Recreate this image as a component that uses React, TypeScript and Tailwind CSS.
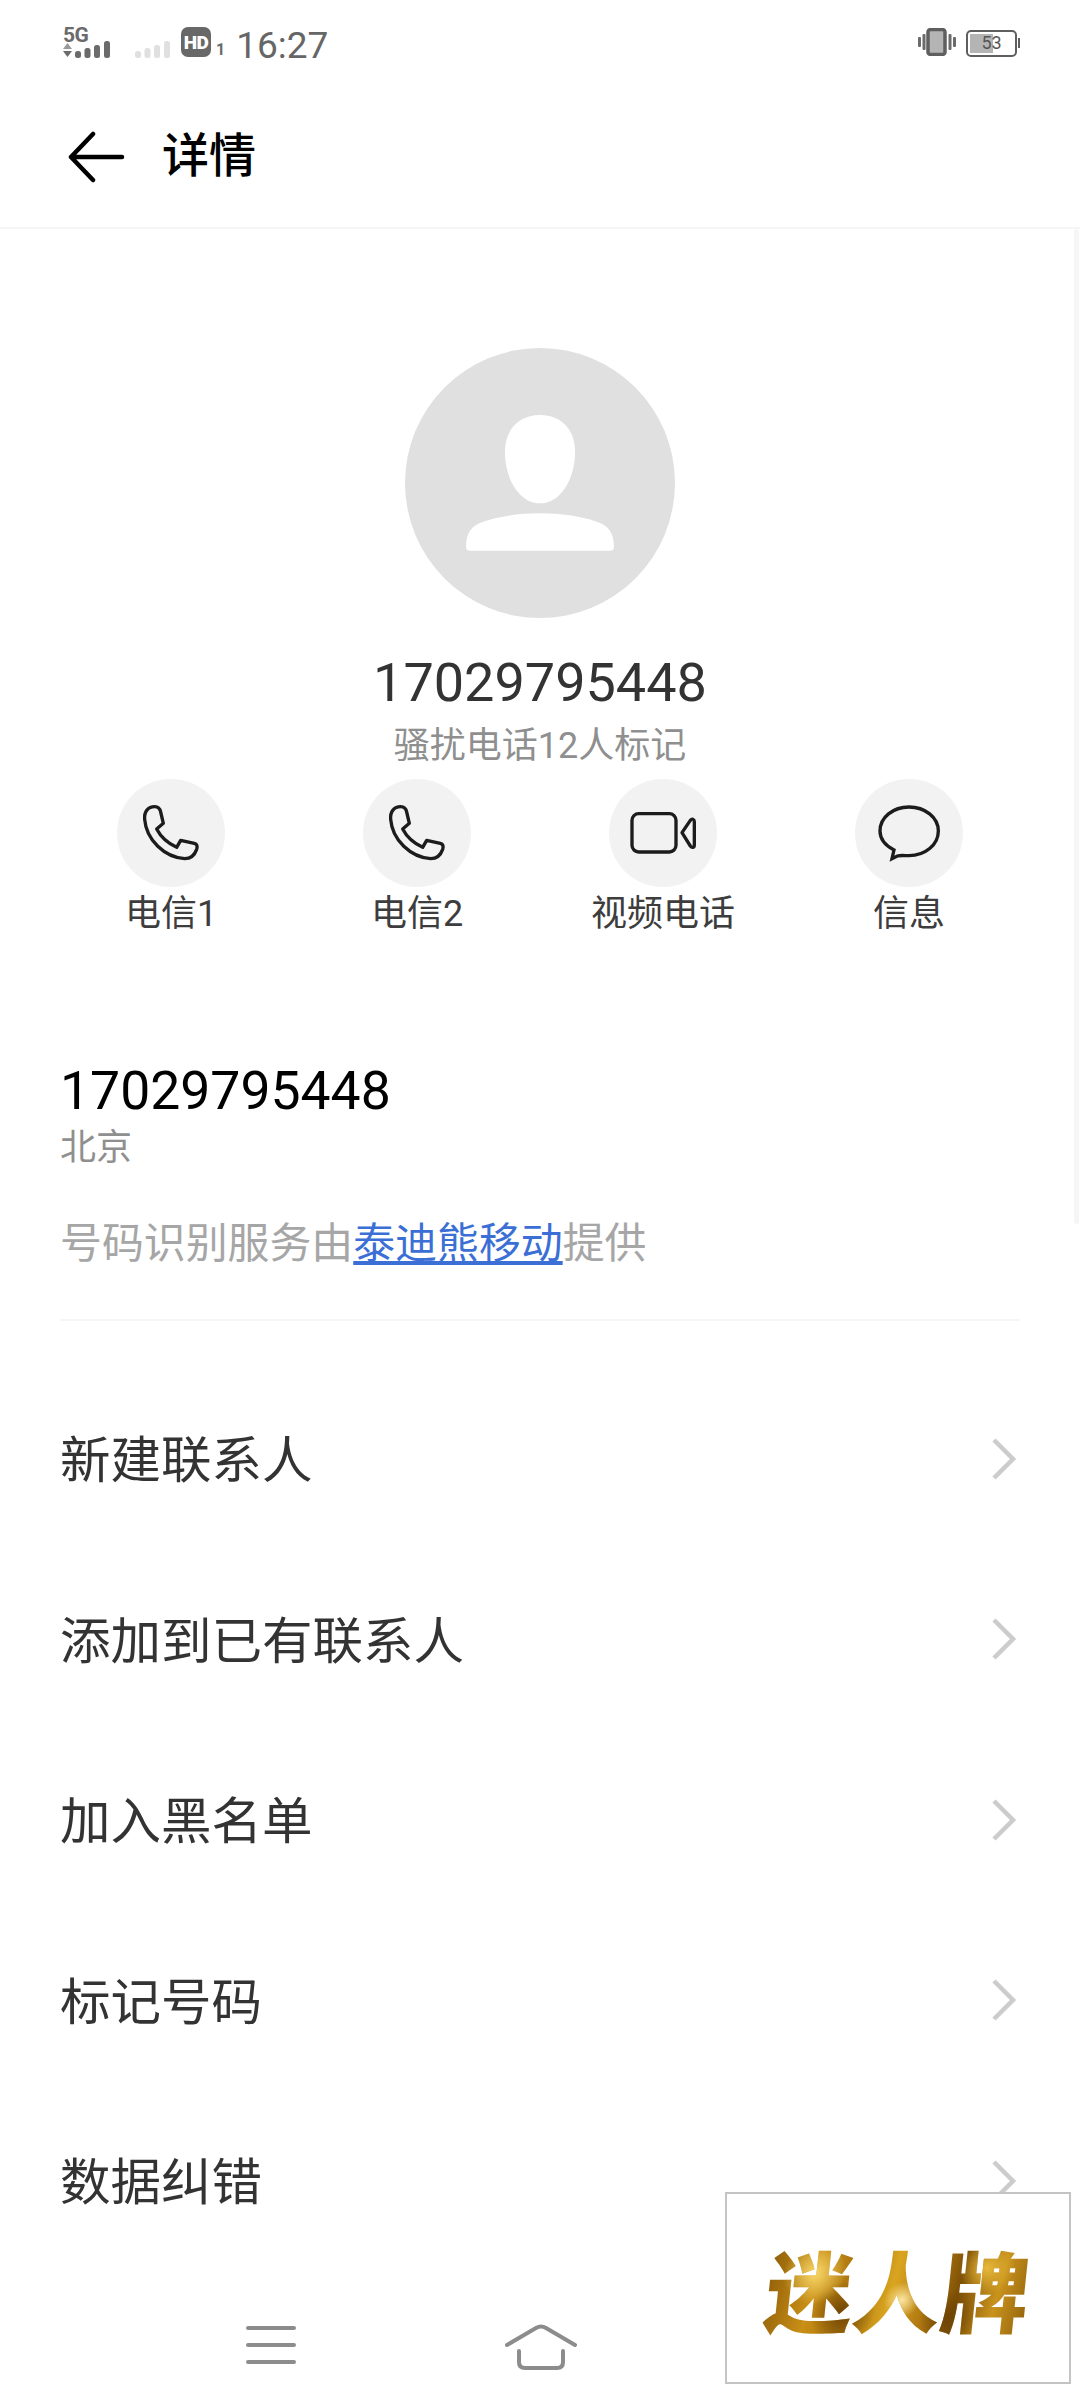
import React from "react"

const rows = ["新建联系人", "添加到已有联系人", "加入黑名单", "标记号码", "数据纠错"]

// Signal bars for the two SIM slots
function Bars({ color }: { color: string }) {
  return (
    <svg width="36" height="17" viewBox="0 0 36 17">
      <rect x="0" y="10" width="6" height="7" rx="2.5" fill={color} />
      <rect x="9.5" y="7" width="6" height="10" rx="2.5" fill={color} />
      <rect x="19" y="4" width="6" height="13" rx="2.5" fill={color} />
      <rect x="29" y="0" width="6" height="17" rx="2.5" fill={color} />
    </svg>
  )
}

function StatusBar() {
  return (
    <div className="flex h-[76px] items-start justify-between pl-[63px] pr-[60px] pt-[27px]">
      <div className="flex items-start">
        <div className="relative h-[31px] w-[48px]">
          <span className="absolute left-0 top-[-4px] text-[21px] font-bold leading-[24px] tracking-[-0.5px] text-[#6b6b6b]">5G</span>
          <svg className="absolute left-0 top-[16px]" width="9" height="14" viewBox="0 0 9 14">
            <path d="M4.5 0 9 6H0Z" fill="#9a9a9a" />
            <path d="M0 8h9l-4.500 6Z" fill="#6b6b6b" />
          </svg>
          <div className="absolute left-[12px] top-[14px]">
            <Bars color="#6b6b6b" />
          </div>
        </div>
        <div className="ml-[24px] mt-[14px]">
          <Bars color="#e0e0e0" />
        </div>
        <div className="ml-[10px] flex h-[30px] w-[30px] items-center justify-center rounded-[7px] bg-[#686868] text-[19px] font-black leading-none tracking-[-0.5px] text-white">
          HD
        </div>
        <span className="ml-[5px] mt-[14px] text-[16px] font-bold leading-[18px] text-[#6b6b6b]">1</span>
        <span className="ml-[11px] mt-[-3px] text-[37px] leading-[44px] text-[#666666]">16:27</span>
      </div>
      <div className="flex items-start">
        <svg className="mt-[1px]" width="38" height="28" viewBox="0 0 38 28">
          <rect x="10" y="1.500" width="17" height="25" rx="2.500" fill="#b4b4b4" stroke="#5f5f5f" strokeWidth="3.500" />
          <rect x="0" y="9" width="3" height="10" rx="1" fill="#6b6b6b" />
          <rect x="4.500" y="6" width="3" height="16" rx="1" fill="#6b6b6b" />
          <rect x="30.500" y="6" width="3" height="16" rx="1" fill="#6b6b6b" />
          <rect x="35" y="9" width="3" height="10" rx="1" fill="#6b6b6b" />
        </svg>
        <div className="relative ml-[10px] mt-[3px] h-[27px] w-[51px] overflow-hidden rounded-[5px] border-[2.5px] border-[#5f5f5f] p-[2px]">
          <div className="h-full w-[23px] bg-[#b4b4b4]" />
          <span className="absolute inset-0 text-center text-[18px] leading-[22px] text-[#555555]">53</span>
        </div>
        <div className="ml-[1px] mt-[11px] h-[10px] w-[2px] bg-[#5f5f5f]" />
      </div>
    </div>
  )
}

function PhoneIcon() {
  return (
    <svg width="108" height="108" viewBox="112 57 324 324" fill="none" stroke="#1c1c1c" strokeWidth="10" strokeLinejoin="round">
      <path d="M195 178C193 155 205 140 225 140C237 140 241 146 243 156L251 190L231 207C243 230 265 250 291 262L303 241L344 250C352 252 354 258 351 268C345 285 335 296 315 296C255 292 200 240 195 178Z" />
    </svg>
  )
}

function VideoIcon() {
  return (
    <svg width="108" height="108" viewBox="87 57 324 324" fill="none" stroke="#1c1c1c" strokeWidth="10" strokeLinejoin="round">
      <rect x="156" y="161" width="132" height="115" rx="20" />
      <path d="M306 218L331 181C336 175 343 177 343 185V255C343 263 336 265 331 258Z" />
    </svg>
  )
}

function MessageIcon() {
  return (
    <svg width="108" height="108" viewBox="825 57 324 324" fill="none" stroke="#1c1c1c" strokeWidth="10" strokeLinejoin="miter">
      <path d="M942 270C915 256 900 236 900 213C900 172 939 141 987 141C1035 141 1075 172 1075 213C1075 255 1035 287 987 287C975 287 962 285 952 288L936 296Z" />
    </svg>
  )
}

function Action({ label, children }: { label: string; children: React.ReactNode }) {
  return (
    <div className="flex flex-col items-center">
      <div className="flex h-[108px] w-[108px] items-center justify-center rounded-full bg-[#f2f2f2]">{children}</div>
      <span className="mt-[5px] text-[36px] leading-[44px] text-[#3d3d3d]">{label}</span>
    </div>
  )
}

export default function App() {
  return (
    <div
      className="relative flex h-[2408px] w-[1080px] flex-col overflow-hidden bg-white"
      style={{ fontFamily: 'Roboto, "Noto Sans CJK SC", sans-serif' }}
    >
      <StatusBar />

      {/* Header */}
      <div className="flex h-[153px] items-start border-b-2 border-[#f5f5f5] pl-[68px]">
        <svg className="mt-[55px]" width="58" height="52" viewBox="0 0 58 52" fill="none" stroke="#000000" strokeWidth="4.500" strokeLinecap="round" strokeLinejoin="round">
          <path d="M3 26H54M25 3 3 26 25 49" />
        </svg>
        <span className="ml-[36px] mt-[51px] text-[47px] font-medium leading-[58px] text-black">详情</span>
      </div>

      {/* Content */}
      <div className="relative min-h-0 flex-1 overflow-hidden">
        <div className="absolute right-[1px] top-0 h-[995px] w-[5px] rounded-full bg-[#f6f6f6]" />

        <div className="flex flex-col items-center pt-[119px]">
          <svg width="270" height="270" viewBox="75 54 810 810">
            <circle cx="480" cy="459" r="405" fill="#e0e0e0" />
            <path d="M480 255C545 255 585 300 585 365C585 450 540 520 480 520C420 520 375 450 375 365C375 300 415 255 480 255Z" fill="#ffffff" />
            <path d="M258 650C258 610 275 585 310 575C360 558 420 550 480 550C540 550 600 558 650 575C685 585 702 610 702 650Q702 662 690 662L270 662Q258 662 258 650Z" fill="#ffffff" />
          </svg>
          <div className="mt-[33px] text-[54px] leading-[64px] text-[#333333]">17029795448</div>
          <div className="mt-[9px] text-[36px] leading-[44px] text-[#8f8f8f]">骚扰电话12人标记</div>
        </div>

        <div className="mx-[48px] mt-[11px] grid grid-cols-4">
          <Action label="电信1"><PhoneIcon /></Action>
          <Action label="电信2"><PhoneIcon /></Action>
          <Action label="视频电话"><VideoIcon /></Action>
          <Action label="信息"><MessageIcon /></Action>
        </div>

        <div className="mx-[60px] mt-[123px]">
          <div className="text-[53.500px] leading-[64px] text-black">17029795448</div>
          <div className="mt-[3px] text-[36px] leading-[44px] text-[#8f8f8f]">北京</div>
          <div className="mt-[49px] text-[41.900px] leading-[50px] text-[#a6a6a6]">
            号码识别服务由<span className="text-[#3b6fd6] underline">泰迪熊移动</span>提供
          </div>
          <div className="mt-[50px] h-[2px] bg-[#f5f5f5]" />
        </div>

        <div className="mt-[50px] px-[60px]">
          {rows.map((row) => (
            <div key={row} className="flex h-[180.5px] items-center justify-between">
              <span className="text-[50.500px] leading-[60px] text-[#333333]">{row}</span>
              <svg className="mb-[5px] mr-[3px]" width="26" height="42" viewBox="0 0 26 42" fill="none" stroke="#cccccc" strokeWidth="4.500">
                <path d="M3 2 22 21 3 40" />
              </svg>
            </div>
          ))}
        </div>
      </div>

      {/* Bottom navigation */}
      <div className="flex h-[137px] items-start pl-[246px] pt-[54px]">
        <svg width="50" height="40" viewBox="0 0 50 40" stroke="#8c8c8c" strokeWidth="4" strokeLinecap="round">
          <path d="M2 3H48M2 20H48M2 37H48" />
        </svg>
        <svg className="ml-[209px] mt-[-1px]" width="72" height="46" viewBox="0 0 72 46" fill="none" stroke="#8c8c8c" strokeWidth="4" strokeLinecap="round" strokeLinejoin="round">
          <path d="M2 21 31 4Q36 1 41 4L70 21M14 27V38Q14 44 20 44H52Q58 44 58 38V27" />
        </svg>
      </div>

      {/* Watermark */}
      <div className="absolute left-[725px] top-[2192px] flex h-[192px] w-[346px] items-center justify-center border-2 border-[#c4c4c4] bg-white">
        <span
          className="-skew-x-6 bg-[radial-gradient(circle_at_18%_35%,#f7d76a_0,transparent_14%),radial-gradient(circle_at_52%_62%,#fbe6a2_0,transparent_12%),radial-gradient(circle_at_83%_30%,#e8b93a_0,transparent_12%),radial-gradient(circle_at_30%_75%,#6e4405_0,transparent_16%),radial-gradient(circle_at_70%_80%,#6e4405_0,transparent_14%),linear-gradient(100deg,#8a5a08_0%,#c98f16_20%,#a8720e_34%,#d9a520_48%,#b57d12_60%,#7d5006_72%,#c9931d_86%,#8f5f0b_100%)] bg-clip-text text-[88px] font-black leading-[100px] text-transparent"
          style={{ fontFamily: '"Noto Sans CJK SC", sans-serif' }}
        >
          迷人牌
        </span>
      </div>
    </div>
  )
}
